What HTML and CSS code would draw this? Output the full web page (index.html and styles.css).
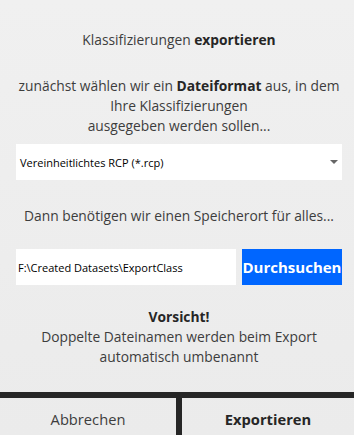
FILE: index.html
```html
<!DOCTYPE html>
<html lang="de">
<head>
<meta charset="utf-8">
<title>Klassifizierungen exportieren</title>
<link rel="stylesheet" href="styles.css">
</head>
<body>
<div class="dialog">
  <div class="content">
    <p class="title">Klassifizierungen <b>exportieren</b></p>
    <p class="intro">zunächst wählen wir ein <b>Dateiformat</b> aus, in dem<br>Ihre Klassifizierungen<br>ausgegeben werden sollen...</p>
    <div class="combo">
      <span class="combo-text">Vereinheitlichtes RCP (*.rcp)</span>
      <svg class="combo-arrow" width="8" height="4" viewBox="0 0 8 4"><path d="M0 0H8L4 4Z" fill="#666"/></svg>
    </div>
    <p class="hint">Dann benötigen wir einen Speicherort für alles...</p>
    <div class="path-row">
      <div class="path-input">F:\Created Datasets\ExportClass</div>
      <div class="browse">Durchsuchen</div>
    </div>
    <p class="warning"><b>Vorsicht!</b><br>Doppelte Dateinamen werden beim Export<br>automatisch umbenannt</p>
  </div>
  <div class="footer">
    <div class="btn">Abbrechen</div>
    <div class="divider"></div>
    <div class="btn primary">Exportieren</div>
  </div>
</div>
</body>
</html>
```
FILE: styles.css
```css
html, body {
  margin: 0;
  padding: 0;
}
body {
  width: 354px;
  height: 435px;
  overflow: hidden;
  background: linear-gradient(#f0f0f0, #ebebeb);
  font-family: "Open Sans", "Noto Sans", sans-serif;
  font-size: 13.8px;
  color: #3d3d3d;
}
.dialog {
  display: flex;
  flex-direction: column;
  height: 435px;
}
.content {
  flex: 1;
  padding: 0 12px 0 16px;
  display: flex;
  flex-direction: column;
}
p {
  margin: 0;
  text-align: center;
  line-height: 20px;
}
b {
  font-weight: 700;
  color: #262626;
}
.title {
  margin-top: 30px;
}
.intro {
  margin-top: 26px;
}
.combo {
  margin-top: 8px;
  height: 36px;
  background: #fff;
  display: flex;
  align-items: center;
  justify-content: space-between;
  padding: 0 4px 0 4px;
}
.combo-text {
  font-size: 11px;
  color: #000;
}
.hint {
  margin-top: 26px;
}
.path-row {
  margin-top: 23px;
  display: flex;
  gap: 6px;
  height: 36px;
}
.path-input {
  flex: 0 0 220px;
  background: #fff;
  display: flex;
  align-items: center;
  padding-left: 2px;
  box-sizing: border-box;
  font-size: 11px;
  color: #000;
}
.browse {
  flex: 1;
  background: #0066ff;
  color: #fff;
  font-weight: 700;
  font-size: 15px;
  display: flex;
  align-items: center;
  justify-content: center;
}
.warning {
  margin-top: 22px;
}
.footer {
  height: 43px;
  border-top: 6px solid #262626;
  box-sizing: border-box;
  display: flex;
}
.btn {
  flex: 0 0 176px;
  display: flex;
  align-items: center;
  justify-content: center;
  padding-top: 4px;
  font-size: 14.7px;
  color: #3d3d3d;
}
.btn.primary {
  flex: 1;
  font-weight: 700;
  color: #262626;
}
.divider {
  width: 6px;
  background: #262626;
}
```
